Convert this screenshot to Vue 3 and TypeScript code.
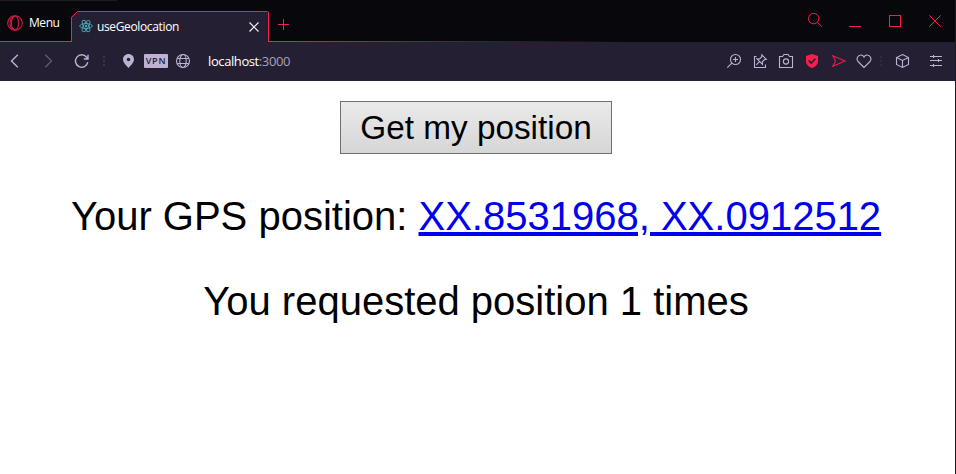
<script setup lang="ts">
import { ref } from 'vue'

const title = 'useGeolocation'
const position = ref({ latitude: 'XX.8531968', longitude: 'XX.0912512' })
const requests = ref(1)

function requestPosition(): void {
  requests.value += 1
}
</script>

<template>
  <div class="window">
    <header class="tabs">
      <div class="menu">
        <svg class="opera" width="16" height="16" viewBox="0 0 16 16">
          <circle cx="8" cy="8" r="7.3" />
          <ellipse cx="8" cy="8" rx="3.6" ry="7" />
          <path d="M8 1c-3 .7-5 3.300-5 7s2 6.300 5 7" />
        </svg>
        <span class="menu-label">Menu</span>
      </div>
      <div class="tab">
        <svg class="outline" width="198" height="31" viewBox="0 0 198 31">
          <path class="fill" d="M0 31V6L6 0H197L198 1V31Z" />
          <path d="M.5 31V6.500L6.500 .5H196.500L197.500 1.500V31" />
        </svg>
        <div class="tab-content">
          <svg class="react" width="14" height="14" viewBox="0 0 14 14">
            <rect width="14" height="14" rx="1" />
            <ellipse cx="7" cy="7" rx="6.300" ry="2.500" />
            <ellipse cx="7" cy="7" rx="6.300" ry="2.500" transform="rotate(60 7 7)" />
            <ellipse cx="7" cy="7" rx="6.300" ry="2.500" transform="rotate(120 7 7)" />
            <circle cx="7" cy="7" r="1.200" />
          </svg>
          <span class="tab-title">{{ title }}</span>
          <svg class="close" width="10" height="10" viewBox="0 0 10 10"><path d="M.5 .5l9 9M9.500 .5l-9 9" /></svg>
        </div>
      </div>
      <div class="strip">
        <svg class="plus" width="11" height="11" viewBox="0 0 11 11"><path d="M5.500 0v11M0 5.500h11" /></svg>
        <div class="controls">
          <svg width="16" height="16" viewBox="0 0 16 16"><circle cx="6.700" cy="6.600" r="5.200" /><path d="M10.500 10.500l4.500 4.300" /></svg>
          <svg class="minimize" width="12" height="14" viewBox="0 0 12 14"><path d="M0 12.500h12" /></svg>
          <svg width="12" height="12" viewBox="0 0 12 12"><rect x=".5" y=".5" width="11" height="11" /></svg>
          <svg width="12" height="12" viewBox="0 0 12 12"><path d="M.3 .3l11.400 11.400M11.700 .3L.3 11.700" /></svg>
        </div>
      </div>
    </header>

    <nav class="toolbar">
      <svg class="icon back" viewBox="0 0 16 16"><path d="M10.800 1.800L4.500 8l6.300 6.200" /></svg>
      <svg class="icon forward" viewBox="0 0 16 16"><path d="M5.200 1.800L11.500 8l-6.300 6.200" /></svg>
      <svg class="icon reload" viewBox="0 0 16 16"><path d="M13.800 9.200A6.200 6.200 0 1 1 12.600 4.200L14 5.800M14 1.700v4.300H9.800" /></svg>
      <svg class="dots first" width="2" height="10" viewBox="0 0 2 10"><path d="M0 1h2M0 5h2M0 9h2" /></svg>
      <svg class="icon pin" viewBox="0 0 16 16"><path d="M8.500 1C5.400 1 3 3.300 3 6.300c0 3.400 3.300 6.100 5.500 8.700C10.700 12.400 14 9.700 14 6.300 14 3.300 11.600 1 8.500 1Zm0 3.700a1.800 1.800 0 1 1 0 3.600 1.800 1.800 0 0 1 0-3.600Z" /></svg>
      <span class="vpn">VPN</span>
      <svg class="icon globe" viewBox="0 0 16 16"><circle cx="8" cy="8" r="6.500" /><ellipse cx="8" cy="8" rx="3.200" ry="6.500" /><path d="M2.300 5.500h11.400M2.300 10.500h11.400" /></svg>
      <span class="address">localhost<span class="port">:3000</span></span>

      <svg class="icon zoom" viewBox="0 0 16 16"><circle cx="9.500" cy="6.500" r="5" /><path d="M5.900 10.100L1.300 14.700M9.500 4v5M7 6.500h5" /></svg>
      <svg class="icon edit" viewBox="0 0 16 16"><path d="M4.500 3.500H2.500v11h11V11.500M9.800 1.800l4.500 4.500-1.700.2-2.300 2.300.2 2.500-5.500-5.500 2.500.2 2.300-2.300ZM7.500 8.700l-3.200 3.200" /></svg>
      <svg class="icon camera" viewBox="0 0 16 16"><path d="M1.500 3.500h3l1.500-2h4l1.500 2h3v11h-13Z" /><circle cx="8" cy="8.500" r="2.600" /></svg>
      <svg class="icon shield" viewBox="0 0 16 16"><path class="solid" d="M8 1l6 2v5.500c0 3-2.700 5.300-6 6.500-3.300-1.200-6-3.500-6-6.500V3Z" /><path class="check" d="M4.700 7.500l2.500 2.600 4.200-4.300" /></svg>
      <svg class="icon send" viewBox="0 0 16 16"><path d="M1.700 2.700L14 8 1.700 13.300 4.600 8Z" /></svg>
      <svg class="icon heart" viewBox="0 0 16 16"><path d="M8 14.500L2.500 9C-.8 5.600 2.300 2 4.900 2 6.500 2 7.500 3 8 4 8.500 3 9.500 2 11.100 2c2.600 0 5.700 3.600 2.400 7Z" /></svg>
      <svg class="dots second" width="2" height="10" viewBox="0 0 2 10"><path d="M0 1h2M0 5h2M0 9h2" /></svg>
      <svg class="icon cube" viewBox="0 0 16 16"><path d="M7.500 1.500L13.500 4.500v7L7.500 14.500l-6-3v-7ZM1.500 4.500l6 3 6-3M7.500 7.500v7" /></svg>
      <svg class="icon sliders" viewBox="0 0 16 16"><path d="M2 3.500h12M2 7.500h12M2 12.500h12M5.500 2v3M10.500 6v3M5.500 11v3" /></svg>
    </nav>

    <main class="page">
      <button class="request" type="button" @click="requestPosition">Get my position</button>
      <p class="line">Your GPS position: <a href="#">{{ position.latitude }}, {{ position.longitude }}</a></p>
      <p class="line">You requested position {{ requests }} times</p>
    </main>
  </div>
</template>

<style>
body {
  margin: 0;
  overflow: hidden;
}
</style>

<style scoped>
.window {
  display: flex;
  flex-direction: column;
  box-sizing: border-box;
  height: 100vh;
  border-right: 1px solid #1c1b1d;
  background: #fff;
}

svg {
  flex: none;
  display: block;
  fill: none;
  stroke: #fa1e4e;
}

.tabs {
  flex: none;
  display: flex;
  height: 42px;
  background: linear-gradient(#1d1d1f, #1d1d1f) 0 0 / 117px 1px no-repeat #08080c;
  font: 12px/16px "Open Sans", "Noto Sans", sans-serif;
  color: #fff;
}

.menu {
  display: flex;
  align-items: center;
  gap: 6px;
  box-sizing: border-box;
  width: 71px;
  padding: 4px 0 0 7px;
  border-bottom: 1px solid #fa1e4e;
}

.opera {
  stroke: #d51c45;
  stroke-width: 1.1;
}

.menu-label {
  letter-spacing: -0.45px;
}

.tab {
  display: grid;
  width: 198px;
  height: 31px;
  margin-top: 11px;
}

.outline,
.tab-content {
  grid-area: 1 / 1;
}

.outline .fill {
  fill: #251f33;
  stroke: none;
}

.tab-content {
  display: flex;
  align-items: center;
  padding: 0 10px 0 8px;
}

.react {
  margin-top: -2px;
  stroke: #4ba9be;
  stroke-width: 0.9;
}

.react rect {
  fill: #20232a;
  stroke: none;
}

.react circle {
  fill: #4ba9be;
  stroke: none;
}

.tab-title {
  flex: 1;
  margin-left: 4px;
  letter-spacing: -0.36px;
}

.close {
  stroke: #f2f0f5;
  stroke-width: 1.2;
}

.strip {
  flex: 1;
  display: flex;
  align-items: flex-start;
  justify-content: space-between;
  padding: 0 14px 0 9px;
  background: linear-gradient(to right, #fa1e4e, rgba(250, 30, 78, 0)) 0 100% / 350px 1px no-repeat;
}

.plus {
  margin-top: 19px;
}

.controls {
  display: flex;
  align-items: center;
  gap: 28px;
  height: 42px;
}

.controls svg:first-child {
  margin: 0 -2px 2px 0;
}

.toolbar {
  flex: none;
  display: flex;
  align-items: center;
  box-sizing: border-box;
  height: 39px;
  padding: 0 11px 1px 7px;
  background: #251f33;
}

.icon {
  width: 16px;
  height: 16px;
  stroke: #bdb2d2;
  stroke-width: 1.1;
}

.back {
  stroke-width: 1.4;
}

.forward {
  margin-left: 17px;
  stroke: #615775;
  stroke-width: 1.4;
}

.reload {
  margin-left: 18px;
  stroke-width: 1.4;
}

.dots {
  stroke: #3b344b;
  stroke-width: 2;
}

.first {
  margin-left: 13px;
}

.pin {
  margin-left: 15px;
  fill: #bdb2d2;
  fill-rule: evenodd;
  stroke: none;
}

.vpn {
  width: 24px;
  height: 14px;
  margin-left: 8px;
  border-radius: 1px;
  background: #bdb2d2;
  color: #251f33;
  font: 600 9px/14px "Open Sans", "Noto Sans", sans-serif;
  letter-spacing: 0.8px;
  text-align: center;
}

.globe {
  margin-left: 7px;
}

.address {
  flex: 1;
  margin-left: 17px;
  color: #fff;
  font: 13px/18px "Open Sans", "Noto Sans", sans-serif;
  letter-spacing: -0.4px;
}

.port {
  color: #a99fbd;
}

.edit,
.camera,
.shield {
  margin-left: 10px;
}

.shield {
  stroke: none;
}

.solid {
  fill: #fa1e4e;
}

.check {
  stroke: #251f33;
  stroke-width: 1.6;
}

.send {
  margin-left: 11px;
  stroke: #e51f4c;
}

.heart {
  margin-left: 9px;
}

.second {
  margin-left: 8px;
  stroke: #312a40;
}

.cube {
  margin-left: 13px;
}

.sliders {
  margin-left: 17px;
}

.page {
  flex: 1;
  display: flex;
  flex-direction: column;
  align-items: center;
  padding: 20px 3px 0 0;
  font-family: "Liberation Sans", Arial, sans-serif;
  color: #000;
}

.request {
  width: 272px;
  height: 53px;
  padding: 0;
  border: 1px solid #707070;
  border-radius: 0;
  background: linear-gradient(#eaeaea, #d6d6d6);
  color: #000;
  font: 33.333px/50px "Liberation Sans", Arial, sans-serif;
}

.line {
  margin: 39px 0 0;
  font-size: 40px;
  line-height: 46px;
  white-space: nowrap;
}

.line a {
  color: #00e;
}
</style>
